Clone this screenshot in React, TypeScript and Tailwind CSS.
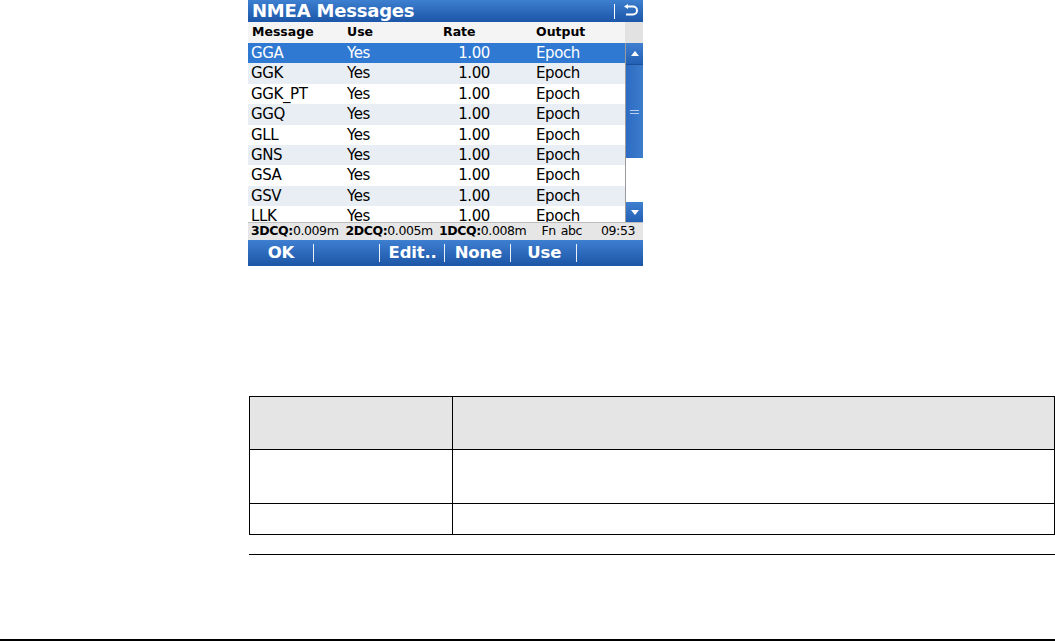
const rows = [
  { msg: "GGA", use: "Yes", rate: "1.00", out: "Epoch" },
  { msg: "GGK", use: "Yes", rate: "1.00", out: "Epoch" },
  { msg: "GGK_PT", use: "Yes", rate: "1.00", out: "Epoch" },
  { msg: "GGQ", use: "Yes", rate: "1.00", out: "Epoch" },
  { msg: "GLL", use: "Yes", rate: "1.00", out: "Epoch" },
  { msg: "GNS", use: "Yes", rate: "1.00", out: "Epoch" },
  { msg: "GSA", use: "Yes", rate: "1.00", out: "Epoch" },
  { msg: "GSV", use: "Yes", rate: "1.00", out: "Epoch" },
  { msg: "LLK", use: "Yes", rate: "1.00", out: "Epoch" },
];

const softkeys = ["OK", "", "Edit..", "None", "Use", ""];

function ScreenShot() {
  return (
    <div className="w-[395px] h-[266px] flex flex-col overflow-hidden font-['DejaVu_Sans',sans-serif]">
      {/* Title bar */}
      <div className="h-[22px] flex items-center bg-gradient-to-b from-[#3d7fd0] to-[#1c56a8] text-white">
        <span className="pl-[4px] text-[18px] font-bold tracking-[-0.2px] leading-none">NMEA Messages</span>
        <div className="ml-auto flex items-center">
          <div className="w-[1px] h-[15px] bg-white mr-[8px]" />
          <svg width="16" height="14" viewBox="0 0 16 14" className="mr-[4px]">
            <path d="M3 2.5 H10 A4 4 0 0 1 10 10.5 H3" fill="none" stroke="white" strokeWidth="2" />
            <path d="M1 2.5 L5 0 L5 5 Z" fill="white" />
          </svg>
        </div>
      </div>

      {/* Column header */}
      <div className="h-[21px] flex bg-[#f4f4f4] text-[12.5px] font-bold text-black items-center">
        <div className="flex-1 flex items-center">
          <span className="w-[99px] pl-[4px]">Message</span>
          <span className="w-[96px]">Use</span>
          <span className="w-[93px]">Rate</span>
          <span>Output</span>
        </div>
        <div className="w-[18px] h-full bg-[#e2e2e2]" />
      </div>

      {/* List with scrollbar */}
      <div className="h-[179px] flex overflow-hidden">
        <div className="flex-1 flex flex-col">
          {rows.map((r, i) => (
            <div
              key={r.msg}
              className={
                "h-[20.4px] shrink-0 flex items-center text-[15px] tracking-[-0.4px] " +
                (i === 0
                  ? "bg-[#2f79d2] text-white"
                  : i % 2 === 1
                  ? "bg-[#e9eef5] text-black"
                  : "bg-white text-black")
              }
            >
              <span className="w-[99px] pl-[3px]">{r.msg}</span>
              <span className="w-[96px]">{r.use}</span>
              <span className="w-[47px] text-right">{r.rate}</span>
              <span className="pl-[46px]">{r.out}</span>
            </div>
          ))}
        </div>
        <div className="w-[18px] flex flex-col border-l border-[#9a9a9a] bg-white">
          <div className="h-[21px] flex items-center justify-center bg-gradient-to-b from-[#3f7fd0] to-[#2360b4]">
            <svg width="8" height="5" viewBox="0 0 8 5"><path d="M0 5 L4 0 L8 5 Z" fill="white" /></svg>
          </div>
          <div className="h-[94px] flex items-center justify-center bg-gradient-to-r from-[#2d6cc2] to-[#3c7ccc] border-t border-[#1b4f98]">
            <div className="flex flex-col gap-[2px]">
              <div className="w-[9px] h-[1px] bg-[#b9cff0]" />
              <div className="w-[9px] h-[1px] bg-[#b9cff0]" />
            </div>
          </div>
          <div className="flex-1 bg-white" />
          <div className="h-[20px] flex items-center justify-center bg-gradient-to-b from-[#3f7fd0] to-[#2360b4]">
            <svg width="8" height="5" viewBox="0 0 8 5"><path d="M0 0 L4 5 L8 0 Z" fill="white" /></svg>
          </div>
        </div>
      </div>

      {/* Status bar */}
      <div className="h-[18px] flex items-center bg-[#e6e6e6] text-[12.5px] text-black tracking-[-0.4px] border-t border-[#bdbdbd] whitespace-nowrap">
        <span className="pl-[3px]"><b>3DCQ:</b>0.009m</span>
        <span className="pl-[7px]"><b>2DCQ:</b>0.005m</span>
        <span className="pl-[6px]"><b>1DCQ:</b>0.008m</span>
        <span className="ml-auto">Fn</span>
        <span className="pl-[5px]">abc</span>
        <span className="pl-[19px] pr-[8px]">09:53</span>
      </div>

      {/* Softkeys */}
      <div className="flex-1 flex items-center bg-gradient-to-b from-[#3e7fd1] to-[#1c55a6] text-white">
        {softkeys.map((k, i) => (
          <div key={i} className="w-[66px] h-[18px] flex items-center justify-center relative">
            <span className="text-[16.5px] font-bold tracking-[-0.2px]">{k}</span>
            {i < 5 && <div className="absolute right-0 top-0 w-[1px] h-[18px] bg-white/90" />}
          </div>
        ))}
      </div>
    </div>
  );
}

export default function App() {
  return (
    <div className="w-[1055px] h-[641px] bg-white flex flex-col">
      <div className="pl-[248px]">
        <ScreenShot />
      </div>

      <div className="ml-[249px] mt-[130px] w-[806px] border border-black text-black">
        <div className="h-[53px] flex bg-[#e5e5e5] border-b border-black">
          <div className="w-[203px] border-r border-black" />
          <div className="flex-1" />
        </div>
        <div className="h-[54px] flex border-b border-black">
          <div className="w-[203px] border-r border-black" />
          <div className="flex-1" />
        </div>
        <div className="h-[30px] flex">
          <div className="w-[203px] border-r border-black" />
          <div className="flex-1" />
        </div>
      </div>

      <div className="ml-[249px] mt-[19px] w-[806px] h-[1px] bg-black" />

      <div className="mt-auto w-full h-[2px] bg-black" />
    </div>
  );
}
